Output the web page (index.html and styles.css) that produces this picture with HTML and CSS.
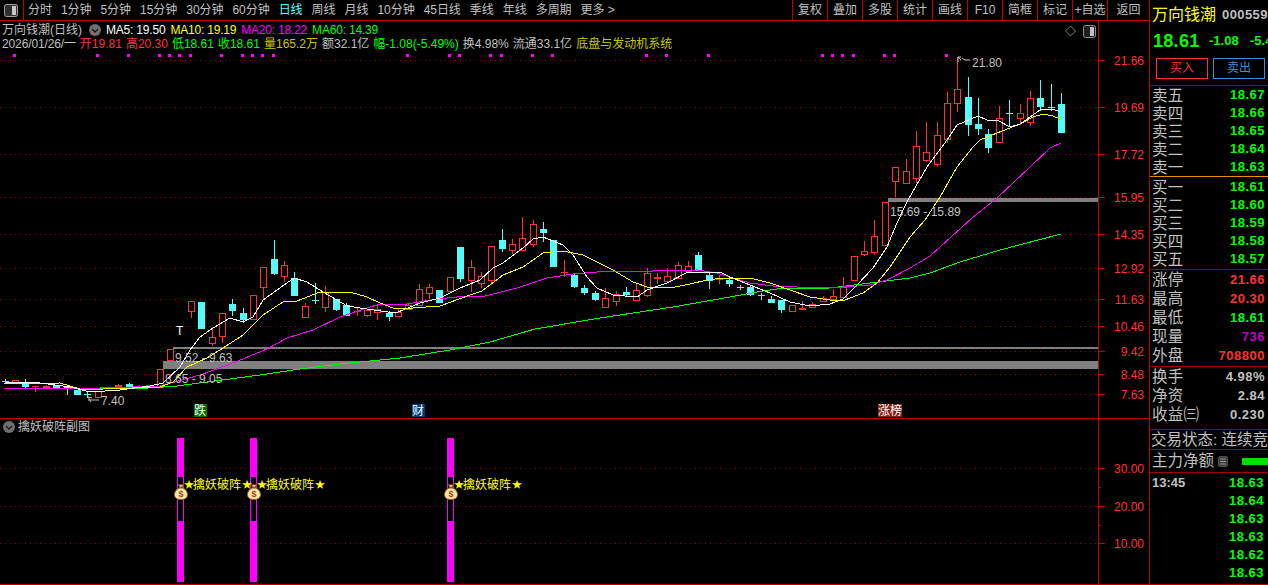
FILE: index.html
```html
<!DOCTYPE html>
<html lang="zh">
<head>
<meta charset="utf-8">
<title>万向钱潮 日线</title>
<link rel="stylesheet" href="styles.css">
</head>
<body>
<div class="app">
  <div class="left">
    <nav class="toolbar">
      <div class="tb-icon">
        <svg width="14" height="13" viewBox="0 0 14 13"><rect x="0.5" y="0.5" width="13" height="12" rx="2" fill="#303030" stroke="#a0a0a0"/><rect x="8" y="2" width="4" height="9" fill="#c8c8c8"/></svg>
      </div>
      <div class="tb-periods">
        <span>分时</span><span>1分钟</span><span>5分钟</span><span>15分钟</span><span>30分钟</span><span>60分钟</span><span class="active">日线</span><span>周线</span><span>月线</span><span>10分钟</span><span>45日线</span><span>季线</span><span>年线</span><span>多周期</span><span>更多 &gt;</span>
      </div>
      <div class="tb-tools">
        <span>复权</span><span>叠加</span><span>多股</span><span>统计</span><span>画线</span><span>F10</span><span>简框</span><span>标记</span><span>+自选</span><span class="tb-back">返回</span>
      </div>
    </nav>

    <section class="chart-main">
      <svg class="plot" id="main-plot" width="1149" height="397" viewBox="0 21 1149 397">
        <g class="grid">
          <line x1="0" x2="1096" y1="60.5" y2="60.5"/><line x1="0" x2="1096" y1="107.5" y2="107.5"/><line x1="0" x2="1096" y1="154.5" y2="154.5"/><line x1="0" x2="1096" y1="197.5" y2="197.5"/><line x1="0" x2="1096" y1="234.5" y2="234.5"/><line x1="0" x2="1096" y1="268.5" y2="268.5"/><line x1="0" x2="1096" y1="299.5" y2="299.5"/><line x1="0" x2="1096" y1="326.5" y2="326.5"/><line x1="0" x2="1096" y1="351.5" y2="351.5"/><line x1="0" x2="1096" y1="374.5" y2="374.5"/><line x1="0" x2="1096" y1="394.5" y2="394.5"/>
        </g>
        <g class="bands">
          <rect x="888" y="198" width="210" height="4"/>
          <rect x="173" y="347" width="925" height="2"/>
          <rect x="163" y="361" width="935" height="8"/>
        </g>
        <g id="candles"></g>
        <g id="lines"></g>
        <g class="marks">
          <text x="890" y="216">15.69 - 15.89</text>
          <text x="175" y="362">9.52 - 9.63</text>
          <text x="165" y="383">8.65 - 9.05</text>
          <text x="972" y="67">21.80</text>
          <text x="101" y="405">7.40</text>
          <text class="mark-t" x="176" y="335">T</text>
          <path class="mark-arrow" d="M958 62V57h3M958 57l3 3M962 58l3 2h5"/>
          <path class="mark-arrow" d="M88 397l3 5M88 397l4 1M88 400h11"/>
        </g>
        <g class="tags">
          <rect class="tag-green" x="194" y="404" width="13" height="13"/><text x="194" y="415">跌</text>
          <rect class="tag-blue" x="412" y="404" width="13" height="13"/><text x="412" y="415">财</text>
          <rect class="tag-red" x="878" y="404" width="24" height="13"/><text x="878" y="415">涨榜</text>
        </g>
        <g id="dots"></g>
        <g class="chart-icons">
          <path class="diamond" d="M1070.5 26l5 5-5 5-5-5z"/>
          <rect x="1083.5" y="25.5" width="12" height="12" rx="2" class="box"/>
          <rect x="1090" y="27" width="4" height="9" class="box-fill"/>
        </g>
        <g class="axis">
          <line x1="1098.5" x2="1098.5" y1="21" y2="418"/>
          <line x1="1098" x2="1105" y1="60.5" y2="60.5"/><line x1="1098" x2="1105" y1="107.5" y2="107.5"/><line x1="1098" x2="1105" y1="154.5" y2="154.5"/><line x1="1098" x2="1105" y1="197.5" y2="197.5"/><line x1="1098" x2="1105" y1="234.5" y2="234.5"/><line x1="1098" x2="1105" y1="268.5" y2="268.5"/><line x1="1098" x2="1105" y1="299.5" y2="299.5"/><line x1="1098" x2="1105" y1="326.5" y2="326.5"/><line x1="1098" x2="1105" y1="351.5" y2="351.5"/><line x1="1098" x2="1105" y1="374.5" y2="374.5"/><line x1="1098" x2="1105" y1="394.5" y2="394.5"/>
        </g>
        <g class="axis-text">
          <text x="1144" y="65">21.66</text><text x="1144" y="112">19.69</text><text x="1144" y="159">17.72</text><text x="1144" y="202">15.95</text><text x="1144" y="239">14.35</text><text x="1144" y="273">12.92</text><text x="1144" y="304">11.63</text><text x="1144" y="331">10.46</text><text x="1144" y="356">9.42</text><text x="1144" y="379">8.48</text><text x="1144" y="399">7.63</text>
        </g>
      </svg>
      <div class="info">
        <div class="info-line">
          <span class="name">万向钱潮(日线)</span>
          <svg class="chev" width="12" height="12" viewBox="0 0 12 12"><circle cx="6" cy="6" r="6" fill="#707070"/><path d="M3 5l3 3 3-3" fill="none" stroke="#1a1a1a" stroke-width="1.4"/></svg>
          <span class="c-white ma-label">MA5: 19.50</span>
          <span class="c-yellow ma-label">MA10: 19.19</span>
          <span class="c-magenta ma-label">MA20: 18.22</span>
          <span class="c-green ma-label">MA60: 14.39</span>
        </div>
        <div class="info-line line-2">
          <span class="date">2026/01/26/一</span>
          <span class="c-red">开19.81</span>
          <span class="c-red">高20.30</span>
          <span class="c-green">低18.61</span>
          <span class="c-green">收18.61</span>
          <span class="c-olive">量165.2万</span>
          <span>额32.1亿</span>
          <span class="c-green">幅-1.08(-5.49%)</span>
          <span>换4.98%</span>
          <span>流通33.1亿</span>
          <span class="c-olive">底盘与发动机系统</span>
        </div>
      </div>
    </section>

    <section class="chart-sub">
      <svg class="plot" id="sub-plot" width="1149" height="165" viewBox="0 419 1149 165">
        <defs>
          <symbol id="bag" viewBox="0 0 14 16">
            <path d="M4.5 0.5h5l-1 3h-3z" fill="#e8b860" stroke="#704020"/>
            <path d="M5 4h4c3 1.500 4.500 4 4.500 6.500C13.500 14 11 15.500 7 15.500S0.500 14 0.500 10.500C0.500 8 2 5.500 5 4z" fill="#ffe89a" stroke="#8a5a30"/>
            <text class="bag-s" x="7" y="13">$</text>
          </symbol>
        </defs>
        <g class="grid">
          <line x1="0" x2="1096" y1="468.5" y2="468.5"/><line x1="0" x2="1096" y1="506.5" y2="506.5"/><line x1="0" x2="1096" y1="543.5" y2="543.5"/>
        </g>
        <g class="bars">
          <rect x="177" y="438" width="7" height="144"/><rect class="hole" x="178" y="477" width="5" height="44"/>
          <rect x="250" y="438" width="7" height="144"/><rect class="hole" x="251" y="477" width="5" height="44"/>
          <rect x="447" y="438" width="7" height="144"/><rect class="hole" x="448" y="477" width="5" height="44"/>
        </g>
        <g class="signal">
          <text><tspan class="star" x="184" y="488">★</tspan><tspan x="193" y="489">擒妖破阵</tspan><tspan class="star" x="242" y="488">★</tspan></text>
          <text><tspan class="star" x="257" y="488">★</tspan><tspan x="266" y="489">擒妖破阵</tspan><tspan class="star" x="315" y="488">★</tspan></text>
          <text><tspan class="star" x="454" y="488">★</tspan><tspan x="463" y="489">擒妖破阵</tspan><tspan class="star" x="512" y="488">★</tspan></text>
        </g>
        <use href="#bag" x="174" y="484" width="14" height="16"/>
        <use href="#bag" x="247" y="484" width="14" height="16"/>
        <use href="#bag" x="444" y="484" width="14" height="16"/>
        <g class="axis">
          <line x1="1098.5" x2="1098.5" y1="419" y2="584"/>
          <line x1="1098" x2="1105" y1="468.5" y2="468.500"/><line x1="1098" x2="1105" y1="506.5" y2="506.5"/><line x1="1098" x2="1105" y1="543.5" y2="543.5"/>
          <line x1="1098" x2="1101" y1="487.5" y2="487.5"/><line x1="1098" x2="1101" y1="525.5" y2="525.5"/>
        </g>
        <g class="axis-text">
          <text x="1144" y="473">30.00</text><text x="1144" y="511">20.00</text><text x="1144" y="548">10.00</text>
        </g>
      </svg>
      <div class="sub-title">
        <svg width="12" height="12" viewBox="0 0 12 12"><circle cx="6" cy="6" r="6" fill="#707070"/><path d="M3 5l3 3 3-3" fill="none" stroke="#1a1a1a" stroke-width="1.4"/></svg>
        <span>擒妖破阵副图</span>
      </div>
    </section>
  </div>

  <aside class="panel">
    <div class="p-head">
      <div class="p-title"><span class="p-name">万向钱潮</span><span class="p-code">000559</span></div>
      <div class="p-price"><span class="p-last">18.61</span><span class="p-chg">-1.08</span><span class="p-pct">-5.49%</span></div>
      <div class="p-btns"><span class="btn btn-buy">买入</span><span class="btn btn-sell">卖出</span></div>
    </div>
    <div class="p-book sell">
      <div class="row"><span>卖五</span><b class="c-green">18.67</b></div>
      <div class="row"><span>卖四</span><b class="c-green">18.66</b></div>
      <div class="row"><span>卖三</span><b class="c-green">18.65</b></div>
      <div class="row"><span>卖二</span><b class="c-green">18.64</b></div>
      <div class="row"><span>卖一</span><b class="c-green">18.63</b></div>
    </div>
    <div class="p-book buy">
      <div class="row"><span>买一</span><b class="c-green">18.61</b></div>
      <div class="row"><span>买二</span><b class="c-green">18.60</b></div>
      <div class="row"><span>买三</span><b class="c-green">18.59</b></div>
      <div class="row"><span>买四</span><b class="c-green">18.58</b></div>
      <div class="row"><span>买五</span><b class="c-green">18.57</b></div>
    </div>
    <div class="p-stats">
      <div class="row"><span>涨停</span><b class="c-red">21.66</b></div>
      <div class="row"><span>最高</span><b class="c-red">20.30</b></div>
      <div class="row"><span>最低</span><b class="c-green">18.61</b></div>
      <div class="row"><span>现量</span><b class="c-purple">736</b></div>
      <div class="row"><span>外盘</span><b class="c-red">708800</b></div>
    </div>
    <div class="p-fin">
      <div class="row"><span>换手</span><b>4.98%</b></div>
      <div class="row"><span>净资</span><b>2.84</b></div>
      <div class="row"><span>收益㈢</span><b>0.230</b></div>
    </div>
    <div class="p-state">交易状态: 连续竞价</div>
    <div class="p-flow">
      <span>主力净额</span>
      <svg width="12" height="13" viewBox="0 0 12 13"><rect x="0.500" y="0.500" width="11" height="12" rx="2" fill="#383838" stroke="#606060"/><path d="M2.500 3.500h7M2.500 6.500h7M2.500 9.500h7" stroke="#b0b0b0"/></svg>
      <i class="flow-bar"></i>
    </div>
    <div class="p-ticks">
      <div class="tick"><span>13:45</span><b class="c-green">18.63</b></div>
      <div class="tick"><span></span><b class="c-green">18.64</b></div>
      <div class="tick"><span></span><b class="c-green">18.63</b></div>
      <div class="tick"><span></span><b class="c-green">18.63</b></div>
      <div class="tick"><span></span><b class="c-green">18.62</b></div>
      <div class="tick"><span></span><b class="c-green">18.63</b></div>
    </div>
  </aside>
</div>
<script src="chart.js"></script>
</body>
</html>
```

FILE: styles.css
```css
* { box-sizing: border-box; }
html, body { margin: 0; padding: 0; background: #000; }
body {
  width: 1268px; height: 585px; overflow: hidden;
  font: 12px/14px "Liberation Sans", "Noto Sans CJK SC", sans-serif;
  color: #c0c0c0;
}
.app { display: flex; width: 1268px; height: 585px; border-bottom: 1px solid #c00000; }
.left { width: 1149px; display: flex; flex-direction: column; }

.toolbar { display: flex; height: 21px; border-bottom: 1px solid #c00000; line-height: 20px; }
.tb-icon { width: 24px; border-right: 1px solid #c00000; display: flex; align-items: center; justify-content: center; padding-right: 2px; }
.tb-periods { display: flex; gap: 9px; padding-left: 4px; white-space: nowrap; letter-spacing: -0.04px; }
.tb-periods .active { color: #54ffff; }
.tb-tools { margin-left: auto; display: flex; }
.tb-tools span { width: 35px; text-align: center; border-left: 1px solid #c00000; }
.tb-tools .tb-back { width: 42px; }

.chart-main { position: relative; height: 398px; border-bottom: 1px solid #c00000; }
.chart-sub { position: relative; height: 165px; }
.plot { display: block; }

.grid line { stroke: #a00000; stroke-width: 1; stroke-dasharray: 1 4; shape-rendering: crispEdges; }
.bands rect { fill: #808080; }
.axis line { stroke: #c00000; stroke-width: 1; shape-rendering: crispEdges; }
.axis-text text { fill: #ff3232; text-anchor: end; font-size: 12px; }
.marks text { fill: #c0c0c0; font-size: 12px; }
.marks .mark-t { fill: #fff; }
.mark-arrow { fill: none; stroke: #c0c0c0; stroke-width: 1; }
.tags text { fill: #fff; font-size: 12px; }
.tag-green { fill: #007000; }
.tag-blue { fill: #003c78; }
.tag-red { fill: #802010; }
.diamond { fill: none; stroke: #808080; }
.box { fill: #202020; stroke: #909090; }
.box-fill { fill: #c0c0c0; }
.dot { fill: #ff00ff; }
.cd-red { fill: #000; stroke: #ff3232; stroke-width: 1; shape-rendering: crispEdges; }
.cd-red-fill { fill: #ff3232; shape-rendering: crispEdges; }
.cd-cyan { fill: #54fcfc; shape-rendering: crispEdges; }
.cd-wick-red { stroke: #ff3232; stroke-width: 1; shape-rendering: crispEdges; }
.cd-wick-cyan { stroke: #54fcfc; stroke-width: 1; shape-rendering: crispEdges; }
.ma { fill: none; stroke-width: 1; shape-rendering: crispEdges; }
.ma-white { stroke: #fff; }
.ma-yellow { stroke: #ffff00; }
.ma-magenta { stroke: #ff00ff; }
.ma-green { stroke: #00ff00; }

.info { position: absolute; left: 2px; top: 2px; white-space: nowrap; }
.info-line { display: flex; align-items: center; height: 14px; gap: 5px; }
.info-line .chev { margin: 0 0 0 1px; }
.ma-label { letter-spacing: -0.2px; }
.line-2 { gap: 4px; }
.line-2 .date { letter-spacing: -0.13px; }
.name { width: 81px; }
.c-white { color: #fff; }
.c-yellow { color: #ffff00; }
.c-magenta { color: #ff00ff; }
.c-green { color: #00ff00; }
.c-red { color: #ff3232; }
.c-olive { color: #c8c800; }
.c-purple { color: #c000c0; }

.sub-title { position: absolute; left: 3px; top: 1px; display: flex; align-items: center; gap: 3px; height: 14px; }

.bars rect { fill: #ff00ff; }
.bars .hole { fill: #000; }
.signal text { fill: #ffff00; font-size: 12px; }
.signal .star { font-size: 10px; }
.bag-s { fill: #a04040; font-size: 9px; font-weight: bold; text-anchor: middle; }

.panel { width: 119px; border-left: 1px solid #c00000; overflow: hidden; display: flex; flex-direction: column; }
.p-head { height: 85px; }
.p-title { display: flex; align-items: center; height: 29px; padding: 1px 0 0 2px; white-space: nowrap; }
.p-name { font-size: 16px; color: #ffff00; width: 70px; flex: none; }
.p-code { font-size: 13px; font-weight: bold; letter-spacing: .4px; }
.p-price { display: flex; align-items: center; height: 24px; white-space: nowrap; padding-left: 3px; font-weight: bold; color: #00ff00; }
.p-last { font-size: 18px; width: 56px; flex: none; letter-spacing: .3px; }
.p-chg { width: 41px; flex: none; font-size: 13px; }
.p-pct { font-size: 13px; flex: none; }
.p-btns { display: flex; gap: 5px; padding: 5px 0 0 6px; }
.btn { width: 52px; height: 21px; line-height: 19px; text-align: center; border: 1px solid; }
.btn-buy { border-color: #ff3232; color: #ff3232; }
.btn-sell { border-color: #3c8cdc; color: #3c8cdc; }

.row { display: flex; align-items: center; justify-content: space-between; padding: 0 3px 0 2px; white-space: nowrap; }
.row span { font-size: 15.5px; letter-spacing: .3px; padding-top: 1px; }
.row b, .tick b { font-size: 13px; letter-spacing: .5px; }
.p-book .row { height: 18px; }
.sell { border-top: 1px solid #a00000; height: 91px; }
.buy { border-top: 1px solid #e09000; height: 93px; padding-top: 1px; }
.p-stats { border-top: 1px solid #a00000; height: 97px; }
.p-stats .row { height: 19px; }
.p-fin { border-top: 1px solid #a00000; height: 63px; }
.p-fin .row { height: 19px; }
.p-state { border-top: 1px solid #a00000; height: 20px; line-height: 20px; font-size: 15.5px; white-space: nowrap; padding-left: 1px; }
.p-flow { border-top: 1px solid #a00000; height: 23px; display: flex; align-items: center; padding-left: 2px; font-size: 15.5px; position: relative; }
.p-flow span { width: 66px; flex: none; white-space: nowrap; }
.flow-bar { flex: none; margin-left: 14px; width: 26px; height: 7px; background: #00e000; }
.p-ticks { border-top: 1px solid #a00000; padding-top: 1px; }
.tick { display: flex; justify-content: space-between; align-items: center; height: 18px; padding: 0 4px 0 2px; }
.tick span { font-weight: bold; font-size: 13px; }
```

FILE: chart.js
```js
// [centre x, wick top, wick bottom, body top, body bottom, kind]
var CANDLES = [
  [5,379,383,381,381,'c'],[15,380,383,380,383,'r'],[25,379,388,382,387,'c'],[35,386,392,386,387,'r'],[46,385,389,386,388,'r'],[56,385,388,385,388,'c'],[67,387,395,387,389,'c'],[77,390,395,390,395,'c'],[87,392,398,394,394,'c'],[98,391,397,391,397,'r'],[108,387,389,387,389,'c'],[118,384,388,385,387,'r'],[129,383,389,384,388,'c'],[139,385,389,386,388,'r'],[149,385,388,385,387,'r'],
  [160,369,387,369,387,'r'],[170,349,360,349,360,'r'],[191,301,318,301,311,'r'],[201,302,329,302,329,'c'],[212,327,346,337,343,'r'],[222,313,343,313,336,'r'],[232,299,316,304,311,'c'],[243,308,323,313,320,'c'],[253,295,319,295,319,'r'],[263,267,299,267,287,'r'],[274,240,275,259,274,'c'],[284,261,282,265,276,'r'],[294,272,296,278,296,'c'],[305,303,317,306,317,'r'],[315,283,304,300,300,'c'],[325,286,312,292,307,'r'],[336,299,311,299,310,'c'],[346,303,316,305,316,'c'],[357,308,316,311,312,'r'],[367,309,317,310,315,'r'],[377,305,320,309,312,'r'],[389,311,321,313,317,'c'],[398,309,317,312,316,'r'],[408,303,310,305,309,'r'],[419,284,306,289,305,'r'],[429,284,299,287,293,'r'],[439,290,303,290,303,'c'],
  [450,277,291,277,291,'r'],[460,247,282,247,279,'c'],[471,260,292,267,280,'r'],[481,272,288,276,283,'r'],[491,246,285,246,280,'r'],[502,229,252,240,249,'c'],[512,239,254,244,250,'r'],[522,217,250,238,250,'r'],[533,220,247,224,244,'r'],[543,222,242,229,233,'c'],[553,240,267,240,267,'c'],[564,260,277,272,272,'r'],[574,274,288,275,287,'c'],[584,285,295,288,293,'c'],[595,291,301,293,300,'c'],[605,288,308,298,307,'r'],[616,291,306,294,301,'r'],[626,287,297,292,295,'c'],[636,283,301,290,300,'r'],[647,268,297,273,295,'r'],[657,273,284,277,279,'r'],[667,268,281,276,281,'r'],[678,262,278,265,278,'r'],[688,261,271,266,271,'r'],[698,252,271,255,271,'c'],[709,273,289,275,281,'c'],[719,275,284,278,280,'r'],[729,277,287,280,284,'c'],
  [740,285,290,287,287,'c'],[750,285,296,287,295,'c'],[761,293,300,295,295,'c'],[771,296,303,299,303,'c'],[781,300,313,300,310,'c'],[792,305,311,305,311,'r'],[802,301,310,308,310,'r'],[812,302,307,304,307,'r'],[823,296,301,298,301,'r'],[833,289,299,296,299,'r'],[843,277,297,287,297,'r'],[854,256,280,256,280,'r'],[864,241,256,251,254,'r'],[874,220,255,236,252,'r'],[885,202,245,202,245,'r'],
  [895,167,197,167,181,'r'],[906,159,183,171,183,'r'],[916,131,183,146,178,'r'],[926,122,162,152,160,'r'],[937,122,167,135,164,'r'],[947,92,143,103,139,'r'],[957,57,112,89,103,'r'],[968,77,136,97,125,'c'],[978,98,135,124,129,'c'],[988,129,153,134,148,'c'],[999,106,142,118,142,'r'],[1009,100,127,113,113,'c'],[1020,104,125,113,118,'r'],[1030,91,126,98,122,'r'],[1040,80,111,98,107,'c'],[1051,84,111,107,107,'c'],[1061,93,133,104,133,'c']
];

var LINES = {
  green: [[4,389],[150,388],[177,386],[207,382],[260,375],[300,369],[340,364],[400,358],[450,350],[490,342],[535,329],[600,318],[673,307],[730,297],[763,291],[777,289],[830,288],[870,283],[910,278],[930,273],[960,262],[1000,250],[1061,234]],
  magenta: [[4,388],[100,388],[133,387],[160,386],[200,375],[233,363],[267,349],[287,338],[313,330],[340,317],[367,308],[380,304],[407,304],[437,299],[457,297],[485,296],[517,288],[547,278],[573,274],[597,272],[630,271],[653,271],[697,270],[717,273],[730,277],[750,283],[773,286],[797,287],[830,288],[870,285],[887,280],[910,268],[930,256],[972,218],[997,198],[1030,167],[1050,148],[1061,143]],
  yellow: [[4,384],[60,383],[80,389],[103,389],[133,388],[160,387],[173,382],[187,367],[207,358],[223,348],[243,335],[263,315],[283,302],[297,301],[320,292],[350,292],[367,297],[380,303],[393,308],[413,308],[440,306],[470,295],[482,291],[503,275],[523,267],[543,253],[563,251],[583,255],[613,270],[633,282],[647,287],[670,288],[690,284],[707,280],[723,278],[750,278],[770,283],[790,290],[810,297],[830,300],[845,300],[863,293],[877,283],[890,267],[910,237],[925,220],[940,197],[957,167],[973,147],[980,140],[997,133],[1020,124],[1033,117],[1043,114],[1053,116],[1060,119]],
  white: [[5,382],[40,383],[70,387],[90,392],[120,390],[150,386],[163,383],[180,367],[190,350],[200,337],[213,328],[230,318],[243,322],[253,317],[263,300],[277,290],[294,278],[307,282],[323,292],[337,300],[347,306],[367,309],[388,312],[398,312],[420,303],[440,298],[460,288],[480,280],[493,268],[503,263],[523,248],[533,239],[543,237],[563,245],[573,255],[587,277],[597,288],[613,295],[637,297],[647,290],[667,283],[688,272],[703,272],[720,272],[730,277],[750,285],[770,293],[790,302],[810,306],[830,304],[843,299],[857,285],[873,268],[887,247],[897,223],[908,200],[927,167],[947,140],[957,125],[978,116],[987,120],[997,120],[1010,127],[1020,124],[1040,110],[1053,109],[1060,112]]
};

var DOTS = [14,97,128,159,169,179,190,221,242,252,262,273,407,449,459,490,501,532,552,646,666,708,822,832,842,853,884,894,946];

var NS = 'http://www.w3.org/2000/svg';
function el(parent, name, attrs) {
  var n = document.createElementNS(NS, name);
  for (var k in attrs) n.setAttribute(k, attrs[k]);
  parent.appendChild(n);
  return n;
}

var cg = document.getElementById('candles');
CANDLES.forEach(function (c) {
  var x = c[0], up = c[5] === 'r', h = c[4] - c[3];
  el(cg, 'line', { x1: x + .5, x2: x + .5, y1: c[1], y2: c[2], 'class': up ? 'cd-wick-red' : 'cd-wick-cyan' });
  if (h <= 2) {
    el(cg, 'rect', { x: x - 3, y: c[3], width: 7, height: Math.max(h, 1), 'class': up ? 'cd-red-fill' : 'cd-cyan' });
  } else if (up) {
    el(cg, 'rect', { x: x - 2.5, y: c[3] + .5, width: 6, height: h, 'class': 'cd-red' });
  } else {
    el(cg, 'rect', { x: x - 3, y: c[3], width: 7, height: h, 'class': 'cd-cyan' });
  }
});

var lg = document.getElementById('lines');
['green', 'magenta', 'yellow', 'white'].forEach(function (name) {
  el(lg, 'polyline', {
    points: LINES[name].map(function (p) { return p.join(','); }).join(' '),
    'class': 'ma ma-' + name
  });
});

var dg = document.getElementById('dots');
DOTS.forEach(function (x) {
  el(dg, 'rect', { x: x - 1, y: 54, width: 3, height: 3, 'class': 'dot' });
});
```
